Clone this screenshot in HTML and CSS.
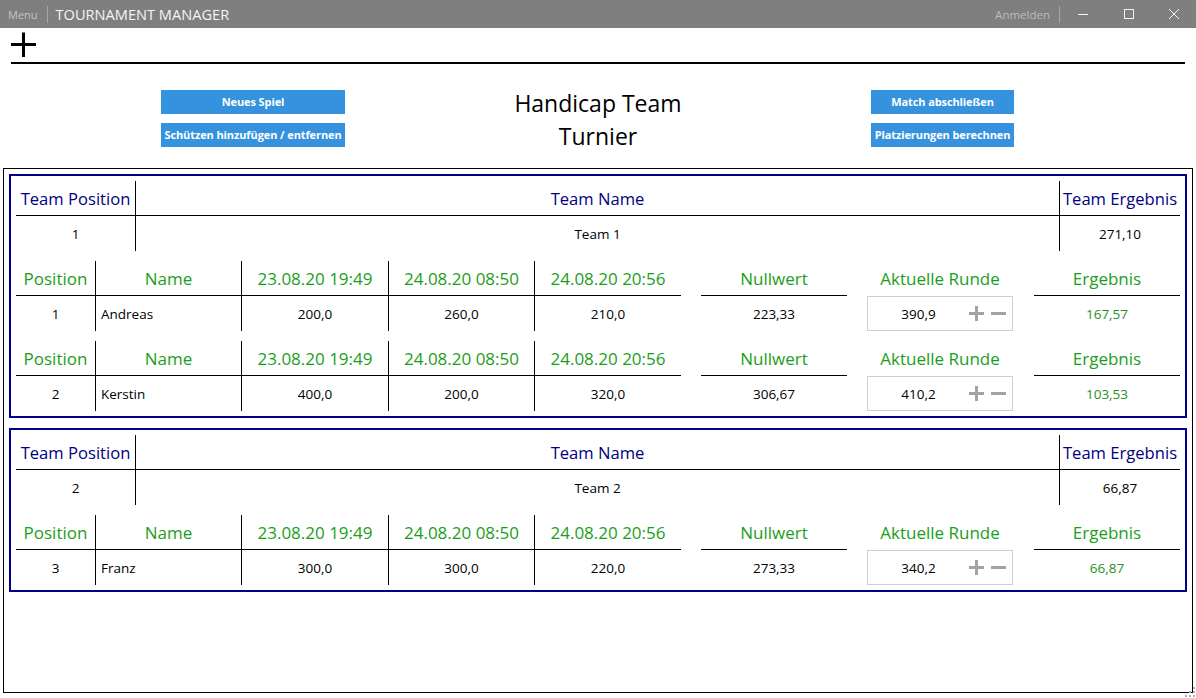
FILE: index.html
```html
<!DOCTYPE html>
<html lang="de">
<head>
<meta charset="utf-8">
<title>Tournament Manager</title>
<link rel="stylesheet" href="styles.css">
</head>
<body>
<div class="titlebar">
  <span class="menu">Menu</span>
  <span class="tsep"></span>
  <span class="apptitle">TOURNAMENT MANAGER</span>
  <span class="tspacer"></span>
  <span class="login">Anmelden</span>
  <span class="tsep"></span>
  <span class="winbtn"><svg width="10" height="10" viewBox="0 0 10 10"><path d="M0 5.5H10" stroke="#f2f2f2" stroke-width="1"/></svg></span>
  <span class="winbtn"><svg width="10" height="10" viewBox="0 0 10 10"><rect x="0.5" y="0.5" width="9" height="9" fill="none" stroke="#f2f2f2" stroke-width="1"/></svg></span>
  <span class="winbtn close"><svg width="10" height="10" viewBox="0 0 10 10"><path d="M0 0L10 10M10 0L0 10" stroke="#f2f2f2" stroke-width="1"/></svg></span>
</div>

<div class="toolbar">
  <svg class="addicon" width="26" height="26" viewBox="0 0 26 26"><path d="M12.5 0.5V25M0 12.5H25" stroke="#000" stroke-width="3"/></svg>
</div>

<div class="header">
  <div class="btncol">
    <button class="btn">Neues Spiel</button>
    <button class="btn">Schützen hinzufügen / entfernen</button>
  </div>
  <h1 class="title">Handicap Team<br>Turnier</h1>
  <div class="btncol">
    <button class="btn">Match abschließen</button>
    <button class="btn">Platzierungen berechnen</button>
  </div>
</div>

<div class="board">
  <section class="team">
    <div class="team-head">
      <div class="th c-pos">Team Position</div>
      <div class="th">Team Name</div>
      <div class="th c-res">Team Ergebnis</div>
      <div class="tv c-pos">1</div>
      <div class="tv">Team 1</div>
      <div class="tv c-res">271,10</div>
    </div>
    <div class="player">
      <div class="ph ln">Position</div>
      <div class="ph ln">Name</div>
      <div class="ph ln">23.08.20 19:49</div>
      <div class="ph ln">24.08.20 08:50</div>
      <div class="ph">24.08.20 20:56</div>
      <div class="ph off">Nullwert</div>
      <div class="ph off nob">Aktuelle Runde</div>
      <div class="ph off2">Ergebnis</div>
      <div class="pv ln">1</div>
      <div class="pv ln name">Andreas</div>
      <div class="pv ln">200,0</div>
      <div class="pv ln">260,0</div>
      <div class="pv">210,0</div>
      <div class="pv off">223,33</div>
      <div class="pv off spin"><span class="spinval">390,9</span><span class="spinbtns"><svg width="15" height="15" viewBox="0 0 15 15"><path d="M7.5 0V15M0 7.5H15" stroke="#a3a3a3" stroke-width="3"/></svg><svg width="15" height="15" viewBox="0 0 15 15"><path d="M0 7.5H15" stroke="#a3a3a3" stroke-width="3"/></svg></span></div>
      <div class="pv off2 res">167,57</div>
    </div>
    <div class="player">
      <div class="ph ln">Position</div>
      <div class="ph ln">Name</div>
      <div class="ph ln">23.08.20 19:49</div>
      <div class="ph ln">24.08.20 08:50</div>
      <div class="ph">24.08.20 20:56</div>
      <div class="ph off">Nullwert</div>
      <div class="ph off nob">Aktuelle Runde</div>
      <div class="ph off2">Ergebnis</div>
      <div class="pv ln">2</div>
      <div class="pv ln name">Kerstin</div>
      <div class="pv ln">400,0</div>
      <div class="pv ln">200,0</div>
      <div class="pv">320,0</div>
      <div class="pv off">306,67</div>
      <div class="pv off spin"><span class="spinval">410,2</span><span class="spinbtns"><svg width="15" height="15" viewBox="0 0 15 15"><path d="M7.5 0V15M0 7.5H15" stroke="#a3a3a3" stroke-width="3"/></svg><svg width="15" height="15" viewBox="0 0 15 15"><path d="M0 7.5H15" stroke="#a3a3a3" stroke-width="3"/></svg></span></div>
      <div class="pv off2 res">103,53</div>
    </div>
  </section>

  <section class="team">
    <div class="team-head">
      <div class="th c-pos">Team Position</div>
      <div class="th">Team Name</div>
      <div class="th c-res">Team Ergebnis</div>
      <div class="tv c-pos">2</div>
      <div class="tv">Team 2</div>
      <div class="tv c-res">66,87</div>
    </div>
    <div class="player">
      <div class="ph ln">Position</div>
      <div class="ph ln">Name</div>
      <div class="ph ln">23.08.20 19:49</div>
      <div class="ph ln">24.08.20 08:50</div>
      <div class="ph">24.08.20 20:56</div>
      <div class="ph off">Nullwert</div>
      <div class="ph off nob">Aktuelle Runde</div>
      <div class="ph off2">Ergebnis</div>
      <div class="pv ln">3</div>
      <div class="pv ln name">Franz</div>
      <div class="pv ln">300,0</div>
      <div class="pv ln">300,0</div>
      <div class="pv">220,0</div>
      <div class="pv off">273,33</div>
      <div class="pv off spin"><span class="spinval">340,2</span><span class="spinbtns"><svg width="15" height="15" viewBox="0 0 15 15"><path d="M7.5 0V15M0 7.5H15" stroke="#a3a3a3" stroke-width="3"/></svg><svg width="15" height="15" viewBox="0 0 15 15"><path d="M0 7.5H15" stroke="#a3a3a3" stroke-width="3"/></svg></span></div>
      <div class="pv off2 res">66,87</div>
    </div>
  </section>
</div>

<svg class="grip" width="10" height="10" viewBox="0 0 10 10">
  <rect x="8" y="0" width="2" height="2" fill="#a9b0bb"/>
  <rect x="4" y="4" width="2" height="2" fill="#a9b0bb"/>
  <rect x="8" y="4" width="2" height="2" fill="#a9b0bb"/>
  <rect x="0" y="8" width="2" height="2" fill="#a9b0bb"/>
  <rect x="4" y="8" width="2" height="2" fill="#a9b0bb"/>
  <rect x="8" y="8" width="2" height="2" fill="#a9b0bb"/>
</svg>
</body>
</html>
```

FILE: styles.css
```css
* { box-sizing: border-box; }

html, body {
  margin: 0;
  padding: 0;
  background: #fff;
}

body {
  width: 1196px;
  height: 698px;
  overflow: hidden;
  position: relative;
  font-family: "Open Sans", "Noto Sans", sans-serif;
  color: #000;
}

/* Title bar */
.titlebar {
  height: 28px;
  background: #7f7f7f;
  display: flex;
  align-items: center;
  padding-left: 8px;
}
.menu {
  font-size: 11px;
  color: #c4c4c4;
}
.tsep {
  width: 1px;
  height: 17px;
  background: #a6a6a6;
  margin: 0 8px 0 9px;
}
.apptitle {
  font-size: 14.6px;
  color: #f4f4f4;
}
.tspacer { flex: 1; }
.login {
  font-size: 11.5px;
  color: #bdbdbd;
}
.winbtn {
  width: 46px;
  height: 28px;
  display: flex;
  align-items: center;
  justify-content: center;
}
.winbtn.close { width: 44px; }
.titlebar .tsep + .winbtn { margin-left: -8px; }

/* Toolbar */
.toolbar {
  height: 36px;
  margin: 0 11px;
  border-bottom: 2px solid #000;
  display: flex;
  align-items: flex-start;
  padding-top: 4px;
}
.addicon { display: block; }

/* Header */
.header {
  height: 104px;
  display: grid;
  grid-template-columns: 184px 1fr 143px;
  padding: 26px 182px 0 161px;
  align-items: start;
}
.btncol {
  display: flex;
  flex-direction: column;
  gap: 9px;
}
.btn {
  height: 24px;
  border: 0;
  padding: 0 0 2px;
  background: #3592de;
  color: #fff;
  font-family: "Open Sans", "Noto Sans", sans-serif;
  font-weight: 700;
  font-size: 11px;
  letter-spacing: -0.1px;
}
.title {
  margin: -3px 20px 0 0;
  font-size: 23px;
  line-height: 33px;
  font-weight: 400;
  text-align: center;
}

/* Board */
.board {
  margin: 0 3px;
  height: 525px;
  border: 1px solid #000;
  padding-top: 5px;
}
.team {
  margin: 0 5px 10px 5px;
  border: 2px solid #00008b;
  padding: 5px;
}

.team-head {
  display: grid;
  grid-template-columns: 120px 1fr 121px;
  grid-template-rows: 35px 35px;
}
.th {
  border-bottom: 1px solid #000;
  color: #000080;
  font-size: 16.6px;
  display: flex;
  align-items: center;
  justify-content: center;
  white-space: nowrap;
}
.tv {
  font-size: 13.5px;
  display: flex;
  align-items: center;
  justify-content: center;
}
.c-pos { border-right: 1px solid #000; }
.c-res { border-left: 1px solid #000; }

.player {
  margin-top: 10px;
  display: grid;
  grid-template-columns: 80px 146px 147px 146px 146px 166px 166px 167px;
  grid-template-rows: 35px 35px;
}
.ph {
  border-bottom: 1px solid #000;
  color: #1a9e1a;
  font-size: 17px;
  display: flex;
  align-items: center;
  justify-content: center;
  white-space: nowrap;
}
.ph.nob { border-bottom: 0; }
.pv {
  font-size: 13.5px;
  display: flex;
  align-items: center;
  justify-content: center;
}
.ln { border-right: 1px solid #000; }
.off { margin-left: 20px; }
.off2 { margin-left: 21px; }
.pv.name {
  justify-content: flex-start;
  padding-left: 5px;
}
.pv.res { color: #278f27; }

.spin {
  border: 1px solid #cfcfcf;
  justify-content: flex-start;
}
.spinval {
  width: 101px;
  text-align: center;
}
.spinbtns {
  display: flex;
  gap: 7px;
  align-items: center;
}
.spinbtns svg { display: block; }

.grip {
  position: absolute;
  right: 1px;
  bottom: 1px;
}
```
